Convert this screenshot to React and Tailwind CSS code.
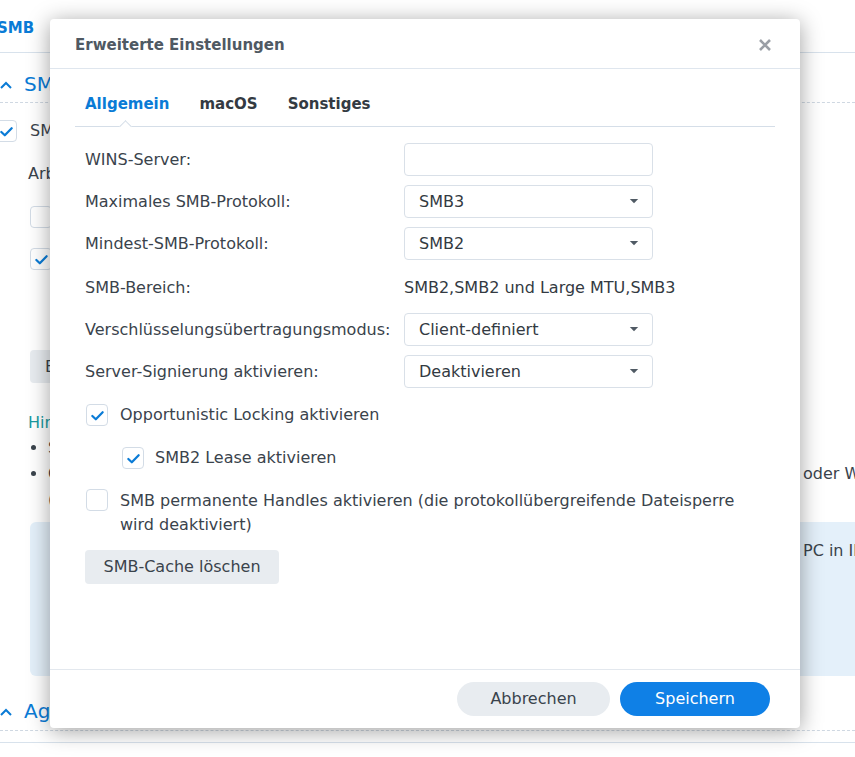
import React from 'react'

const font = { fontFamily: '"DejaVu Sans", Verdana, sans-serif' }

function Check({ checked, className = '' }) {
  return (
    <span className={`flex h-[22px] w-[22px] shrink-0 items-center justify-center rounded-[4px] border border-[#d3dce6] bg-white ${className}`}>
      {checked && (
        <svg viewBox="0 0 16 16" className="h-[15px] w-[15px]">
          <path d="M2.5 8.5 L6.2 12 L13.5 4.5" fill="none" stroke="#0a7bd6" strokeWidth="2.4" strokeLinecap="round" strokeLinejoin="round" />
        </svg>
      )}
    </span>
  )
}

function Select({ value }) {
  return (
    <div className="flex h-[33px] w-[249px] items-center justify-between rounded-[4px] border border-[#d9e0e8] bg-white pl-[14px] pr-[13px] text-[#333a42]">
      <span>{value}</span>
      <svg viewBox="0 0 10 6" className="h-[5px] w-[10px]"><path d="M0 0 H10 L5 5 Z" fill="#505a64" /></svg>
    </div>
  )
}

function Row({ label, children, className = '' }) {
  return (
    <div className={`flex h-[33px] items-center ${className}`}>
      <div className="w-[319px] shrink-0 whitespace-nowrap text-[#3a434c]">{label}</div>
      {children}
    </div>
  )
}

function Chevron() {
  return (
    <svg viewBox="0 0 12 8" className="mb-[9px] h-[8px] w-[12px]"><path d="M1 7 L6 2 L11 7" fill="none" stroke="#0a7bd6" strokeWidth="2" /></svg>
  )
}

function Background() {
  return (
    <div className="relative h-[757px] w-[855px] overflow-hidden bg-white text-[16px] leading-[24px] text-[#3a434c]">
      <div className="flex h-[53px] items-center border-b border-[#d8e2ec]">
        <span className="-ml-[3px] pt-[3px] text-[15px] font-bold text-[#0a7bd6]">SMB</span>
      </div>
      <div className="flex h-[50px] items-end gap-[12px] border-b border-dashed border-[#cfd8e2] pb-[4px]">
        <Chevron />
        <span className="text-[20px] leading-[28px] text-[#0a7bd6]">SMB</span>
      </div>
      <div className="-ml-[5px] mt-[16px] flex items-center gap-[13px]">
        <Check checked />
        <span>SMB-Dienst aktivieren</span>
      </div>
      <div className="ml-[28px] mt-[19px]">Arbeitsgruppe:</div>
      <div className="ml-[30px] mt-[20px] flex flex-col gap-[20px]">
        <Check />
        <Check checked />
      </div>
      <div className="ml-[30px] mt-[80px] flex h-[33px] w-[120px] items-center rounded-[4px] bg-[#e8ecf0] px-[15px]">Erweitert</div>
      <div className="ml-[28px] mt-[28px] text-[#1a9aa0]">Hinweis:</div>
      <ul className="ml-[30px] list-disc pl-[18px] leading-[26px]">
        <li className="whitespace-nowrap">Sie können auf die freigegebenen Ordner zugreifen</li>
        <li>
          <div className="flex"><span className="w-[755px] shrink-0 whitespace-nowrap">Geben Sie die Adresse ein</span><span className="whitespace-nowrap">oder Windows</span></div>
          <div>(siehe Hilfe)</div>
        </li>
      </ul>
      <div className="ml-[30px] mt-[9px] h-[154px] rounded-l-[6px] bg-[#e4f0fa] pt-[17px]">
        <div className="flex"><span className="w-[773px] shrink-0" /><span className="whitespace-nowrap">PC in Ihrem Netzwerk</span></div>
      </div>
      <div className="flex h-[55px] items-end gap-[12px] border-b border-dashed border-[#cfd8e2] pb-[5px]">
        <Chevron />
        <span className="text-[20px] leading-[28px] text-[#0a7bd6]">Agenten</span>
      </div>
      <div className="mt-[11px] border-b border-[#d8e2ec]" />
    </div>
  )
}

export default function App() {
  return (
    <div className="relative h-[757px] w-[855px] overflow-hidden" style={font}>
      <Background />

      <div className="absolute left-[50px] top-[19px] flex h-[709px] w-[750px] flex-col rounded-[4px] bg-white text-[16px] shadow-[0_3px_22px_rgba(0,0,0,0.38)]">
        <div className="flex h-[50px] shrink-0 items-center justify-between border-b border-[#dfe6ee] pl-[25px] pr-[28px] pt-[3px]">
          <span className="text-[15px] font-bold text-[#4f5963]">Erweiterte Einstellungen</span>
          <svg viewBox="0 0 14 14" className="h-[14px] w-[14px]"><path d="M2 2 L12 12 M12 2 L2 12" stroke="#9a9fa6" strokeWidth="2.6" /></svg>
        </div>

        <div className="relative mx-[25px] flex h-[58px] shrink-0 items-center gap-[10px] border-b border-[#d5dee8] pt-[13px]">
          <span className="px-[10px] text-[15px] font-bold text-[#0a7bd6]">Allgemein</span>
          <span className="px-[10px] text-[15px] font-bold text-[#333a42]">macOS</span>
          <span className="px-[10px] text-[15px] font-bold text-[#333a42]">Sonstiges</span>
          <span className="absolute bottom-[-5px] left-[46px] h-[9px] w-[9px] rotate-45 border-l border-t border-[#d5dee8] bg-white" />
        </div>

        <div className="flex flex-1 flex-col px-[35px] pt-[16px]">
          <div className="flex flex-col gap-[9px]">
            <Row label="WINS-Server:">
              <div className="h-[33px] w-[249px] rounded-[4px] border border-[#d9e0e8]" />
            </Row>
            <Row label="Maximales SMB-Protokoll:"><Select value="SMB3" /></Row>
            <Row label="Mindest-SMB-Protokoll:"><Select value="SMB2" /></Row>
            <Row label="SMB-Bereich:" className="mt-[2px]"><span className="whitespace-nowrap text-[#333a42]">SMB2,SMB2 und Large MTU,SMB3</span></Row>
            <Row label="Verschlüsselungsübertragungsmodus:"><Select value="Client-definiert" /></Row>
            <Row label="Server-Signierung aktivieren:"><Select value="Deaktivieren" /></Row>
          </div>

          <div className="mt-[15px] flex items-center gap-[12px] pl-[1px]">
            <Check checked />
            <span className="text-[#3a434c]">Opportunistic Locking aktivieren</span>
          </div>
          <div className="mt-[19px] flex items-center gap-[11px] pl-[37px]">
            <Check checked />
            <span className="text-[#3a434c]">SMB2 Lease aktivieren</span>
          </div>
          <div className="mt-[19px] flex items-start gap-[12px] pl-[1px]">
            <Check />
            <span className="leading-[24px] text-[#3a434c]">SMB permanente Handles aktivieren (die protokollübergreifende Dateisperre wird deaktiviert)</span>
          </div>
          <div className="mt-[13px] flex h-[34px] w-[194px] items-center justify-center rounded-[4px] bg-[#e8ecf0] text-[#3a434c]">SMB-Cache löschen</div>
        </div>

        <div className="flex h-[59px] shrink-0 items-center justify-end gap-[10px] border-t border-[#e3e8ee] pr-[30px]">
          <button className="h-[34px] w-[153px] rounded-full bg-[#e8ecf0] text-[#3a434c]">Abbrechen</button>
          <button className="h-[34px] w-[150px] rounded-full bg-[#0f80e6] text-white">Speichern</button>
        </div>
      </div>
    </div>
  )
}
